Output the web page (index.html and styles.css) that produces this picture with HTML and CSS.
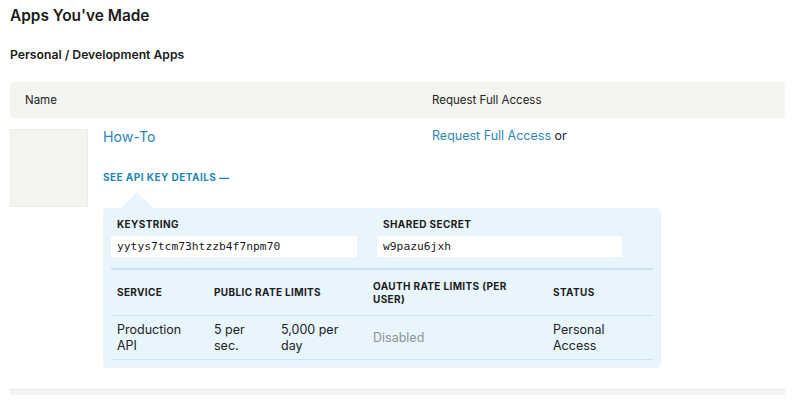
FILE: index.html
```html
<!DOCTYPE html>
<html>
<head>
<meta charset="utf-8">
<link rel="stylesheet" href="styles.css">
</head>
<body>
<div class="page">
  <h1 class="title">Apps You've Made</h1>
  <h2 class="subtitle">Personal / Development Apps</h2>
  <div class="thead">
    <div class="th-name">Name</div>
    <div class="th-access">Request Full Access</div>
  </div>
  <div class="app-row">
    <div class="thumb"></div>
    <div class="app-body">
      <div class="app-top">
        <a class="app-name">How-To</a>
        <div class="app-access"><a class="link">Request Full Access</a> or</div>
      </div>
      <a class="details-toggle">SEE API KEY DETAILS <span class="dash">—</span></a>
      <div class="panel">
        <div class="keys">
          <div class="key">
            <div class="label">KEYSTRING</div>
            <div class="keybox">yytys7tcm73htzzb4f7npm70</div>
          </div>
          <div class="key">
            <div class="label">SHARED SECRET</div>
            <div class="keybox">w9pazu6jxh</div>
          </div>
        </div>
        <div class="rates">
          <div class="rh c1">SERVICE</div>
          <div class="rh c2">PUBLIC RATE LIMITS</div>
          <div class="rh c4">OAUTH RATE LIMITS (PER<br>USER)</div>
          <div class="rh c5">STATUS</div>
          <div class="rd c1">Production<br>API</div>
          <div class="rd c2">5 per<br>sec.</div>
          <div class="rd c3">5,000 per<br>day</div>
          <div class="rd c4 muted">Disabled</div>
          <div class="rd c5">Personal<br>Access</div>
        </div>
      </div>
    </div>
  </div>
  <div class="footer-bar"></div>
</div>
</body>
</html>
```

FILE: styles.css
```css
* { box-sizing: border-box; }
html, body { margin: 0; padding: 0; background: #fff; }
body {
  font-family: "Inter", "Liberation Sans", sans-serif;
  color: #222;
  font-size: 12.5px;
}
.page { padding: 0 15px 0 10px; }
.title {
  margin: 5px 0 0;
  font-size: 15.4px;
  line-height: 22px;
  font-weight: 600;
  color: #1b1b1b;
}
.subtitle {
  margin: 19px 0 0;
  font-size: 12.2px;
  line-height: 18px;
  font-weight: 600;
  color: #1b1b1b;
}
.thead {
  margin-top: 18px;
  height: 36px;
  background: #f4f4f0;
  border-radius: 3px;
  display: flex;
  align-items: center;
  font-size: 11.5px;
  color: #222;
}
.th-name { width: 422px; padding-left: 15px; }
.th-access { flex: 1; }
.app-row {
  margin-top: 11px;
  display: flex;
  gap: 15px;
}
.thumb {
  width: 78px;
  height: 78px;
  background: #f4f4f0;
  border: 1px solid #ecece7;
  flex: none;
}
.app-body { flex: 1; display: flex; flex-direction: column; align-items: flex-start; }
.app-top { display: flex; align-items: center; margin-top: -2px; height: 20px; width: 100%; }
.app-name {
  width: 329px;
  font-size: 14.2px;
  line-height: 20px;
  color: #2b87b4;
}
.app-access { font-size: 12.5px; line-height: 20px; color: #222; margin-top: -2px; }
.link { color: #2b87b4; }
.details-toggle {
  margin-top: 23px;
  font-size: 10px;
  line-height: 14px;
  font-weight: 700;
  letter-spacing: 0.45px;
  color: #1f86b3;
}
.dash { font-weight: 700; }
.panel {
  position: relative;
  margin-top: 24px;
  width: 558px;
  background: #e8f5fc;
  border-radius: 4px;
  padding: 9px 8px 8px;
}
.panel::before {
  content: "";
  position: absolute;
  left: 18px;
  top: -16px;
  border-left: 16px solid transparent;
  border-right: 16px solid transparent;
  border-bottom: 16px solid #e8f5fc;
}
.keys {
  display: flex;
  gap: 20px;
  padding-bottom: 11px;
  border-bottom: 2px solid #c8e4f4;
}
.key { width: 246px; }
.key + .key { width: 245px; }
.label {
  padding-left: 6px;
  font-size: 10px;
  line-height: 14px;
  font-weight: 700;
  letter-spacing: 0.4px;
  color: #1b1b1b;
}
.keybox {
  margin-top: 5px;
  height: 21px;
  background: #fff;
  padding-left: 6px;
  font-family: "DejaVu Sans Mono", "Liberation Mono", monospace;
  font-size: 11.3px;
  line-height: 21px;
  color: #1b1b1b;
}
.rates {
  display: grid;
  grid-template-columns: 97px 67px 92px 180px 106px;
}
.rh, .rd {
  display: flex;
  align-items: center;
  padding: 0 6px;
  border-bottom: 1px solid #c8e4f4;
}
.rh {
  height: 46px;
  font-size: 10px;
  line-height: 13px;
  font-weight: 700;
  letter-spacing: 0.35px;
  color: #1b1b1b;
}
.rh.c2 { grid-column: 2 / span 2; }
.rh.c4 { grid-column: 4; }
.rd {
  height: 44px;
  font-size: 12.5px;
  line-height: 16px;
  color: #222;
}
.muted { color: #8e9396; }
.footer-bar {
  margin-top: 21px;
  height: 6px;
  background: #f4f4f0;
  border-top: 1px solid #e7e7e2;
}
```
